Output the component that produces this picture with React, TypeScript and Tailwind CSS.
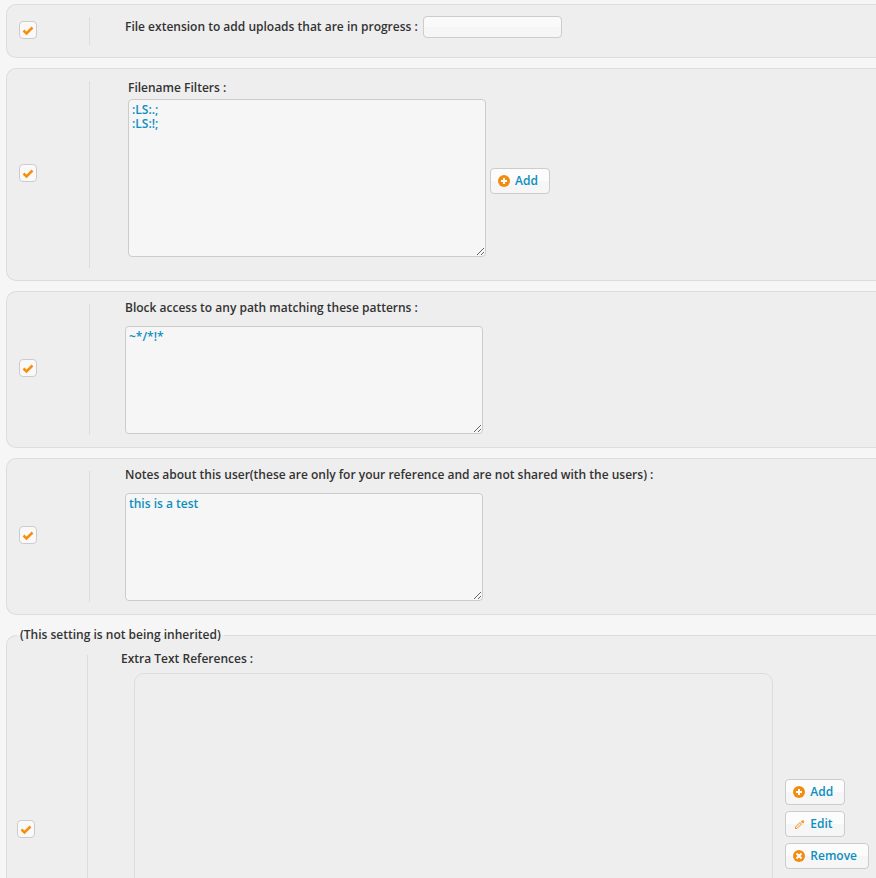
import { useState, type ReactNode } from 'react'

type IconName = 'plus' | 'pencil' | 'close'

function Icon({ name }: { name: IconName }) {
  if (name === 'pencil') {
    return (
      <svg width="12" height="12" viewBox="0 0 12 12" fill="none" stroke="#f28c0f" aria-hidden="true">
        <path d="M2.5 10.5V9L7 4.5L8.5 6L4 10.5Z" />
        <path d="M8.5 3L10.5 5" strokeWidth="1.5" />
        <path d="M9.5 4L10.5 2.5" strokeWidth="1.5" />
      </svg>
    )
  }

  return (
    <svg width="12" height="12" viewBox="0 0 12 12" aria-hidden="true">
      <circle cx="6" cy="6" r="6" fill="#f28c0f" />
      {name === 'plus' ? (
        <path d="M6 3V9M3 6H9" stroke="#fff" strokeWidth="2" />
      ) : (
        <path d="M3.5 3.5L8.5 8.5M8.5 3.5L3.5 8.5" stroke="#fff" strokeWidth="2" />
      )}
    </svg>
  )
}

function IconButton({ icon, children }: { icon: IconName; children: ReactNode }) {
  return (
    <button
      type="button"
      className="flex h-[26px] shrink-0 items-center gap-[5px] rounded-[4px] border border-[#ccc] bg-linear-to-b from-[#fcfcfc] from-50% to-[#f6f6f6] to-50% pr-[11px] pl-[7px] text-[#0b8fc0]"
    >
      <Icon name={icon} />
      {children}
    </button>
  )
}

function Toggle({ label }: { label: string }) {
  const [checked, setChecked] = useState(true)

  return (
    <div className="grid size-[18px] place-items-center">
      <input
        type="checkbox"
        aria-label={label}
        checked={checked}
        onChange={(e) => setChecked(e.target.checked)}
        className="col-start-1 row-start-1 size-[18px] appearance-none rounded-[4px] border border-[#ccc] bg-[#f9f9f9]"
      />
      {checked && (
        <svg
          width="12"
          height="12"
          viewBox="0 0 12 12"
          className="pointer-events-none col-start-1 row-start-1"
          aria-hidden="true"
        >
          <path d="M1.5 6.5L4.5 9.5L10.5 3.5" fill="none" stroke="#f78f0c" strokeWidth="2.5" />
        </svg>
      )}
    </div>
  )
}

function Setting({ label, children }: { label: string; children: ReactNode }) {
  return (
    <section className="flex rounded-l-[10px] border border-r-0 border-[#ddd] bg-[#eee]">
      <div className="flex w-[82px] shrink-0 items-center pb-[3px] pl-3">
        <Toggle label={label} />
      </div>
      <div className="my-3 w-px bg-[#ddd]"></div>
      <div className="min-w-0 flex-1 pl-[35px]">{children}</div>
    </section>
  )
}

const areaClass =
  'block w-[358px] resize rounded-[4px] border border-[#ccc] bg-[#f6f6f6] p-[3px] text-[#0b8fc0]'

export default function App() {
  return (
    <main className="h-screen overflow-y-auto bg-[#f6f6f6] pt-1 pl-[6px] font-['Open_Sans',sans-serif] text-[12px] leading-[14px] font-semibold text-[#333] [scrollbar-width:none]">
      <form className="flex flex-col gap-[10px]">
        <Setting label="Use in-progress extension">
          <div className="flex items-center gap-[5px] pt-[11px] pb-[19px]">
            <label htmlFor="extension">File extension to add uploads that are in progress :</label>
            <input
              id="extension"
              type="text"
              className="h-[22px] w-[139px] rounded-[4px] border border-[#ccc] bg-linear-to-b from-[#fafafa] from-50% to-[#f6f6f6] to-50% px-1 text-[#0b8fc0]"
            />
          </div>
        </Setting>

        <Setting label="Use filename filters">
          <div className="pt-3 pb-[23px] pl-[3px]">
            <label htmlFor="filters" className="mb-1 block">
              Filename Filters :
            </label>
            <div className="flex items-center gap-1">
              <textarea id="filters" defaultValue={':LS:.;\n:LS:!;'} className={`${areaClass} h-[158px]`} />
              <div className="pt-[6px]">
                <IconButton icon="plus">Add</IconButton>
              </div>
            </div>
          </div>
        </Setting>

        <Setting label="Use blocked paths">
          <div className="pt-[9px] pb-[13px]">
            <label htmlFor="patterns" className="mb-[11px] block">
              Block access to any path matching these patterns :
            </label>
            <textarea id="patterns" defaultValue="~*/*!*" className={`${areaClass} h-[108px]`} />
          </div>
        </Setting>

        <Setting label="Use notes">
          <div className="pt-[9px] pb-[13px]">
            <label htmlFor="notes" className="mb-[11px] block">
              Notes about this user(these are only for your reference and are not shared with the users) :
            </label>
            <textarea id="notes" defaultValue="this is a test" className={`${areaClass} h-[108px]`} />
          </div>
        </Setting>

        <fieldset className="mt-[3px] min-w-0 rounded-l-[10px] border border-r-0 border-[#ddd] bg-[#eee] pb-3">
          <legend className="ml-[10px] px-[3px]">(This setting is not being inherited)</legend>
          <div className="flex pt-[10px]">
            <div className="flex w-[80px] shrink-0 items-center pl-[10px]">
              <Toggle label="Use extra text references" />
            </div>
            <div className="mt-[3px] w-px bg-[#ddd]"></div>
            <div className="min-w-0 flex-1 pr-[7px] pb-[30px] pl-[33px]">
              <h3 id="references" className="mb-[7px]">
                Extra Text References :
              </h3>
              <div className="flex items-center gap-3 pl-[13px]">
                <div
                  role="list"
                  aria-labelledby="references"
                  className="h-[302px] min-w-0 flex-1 rounded-[10px] border border-[#ddd]"
                ></div>
                <div className="flex flex-col items-start gap-[6px]">
                  <IconButton icon="plus">Add</IconButton>
                  <IconButton icon="pencil">Edit</IconButton>
                  <IconButton icon="close">Remove</IconButton>
                </div>
              </div>
            </div>
          </div>
        </fieldset>
      </form>
    </main>
  )
}
